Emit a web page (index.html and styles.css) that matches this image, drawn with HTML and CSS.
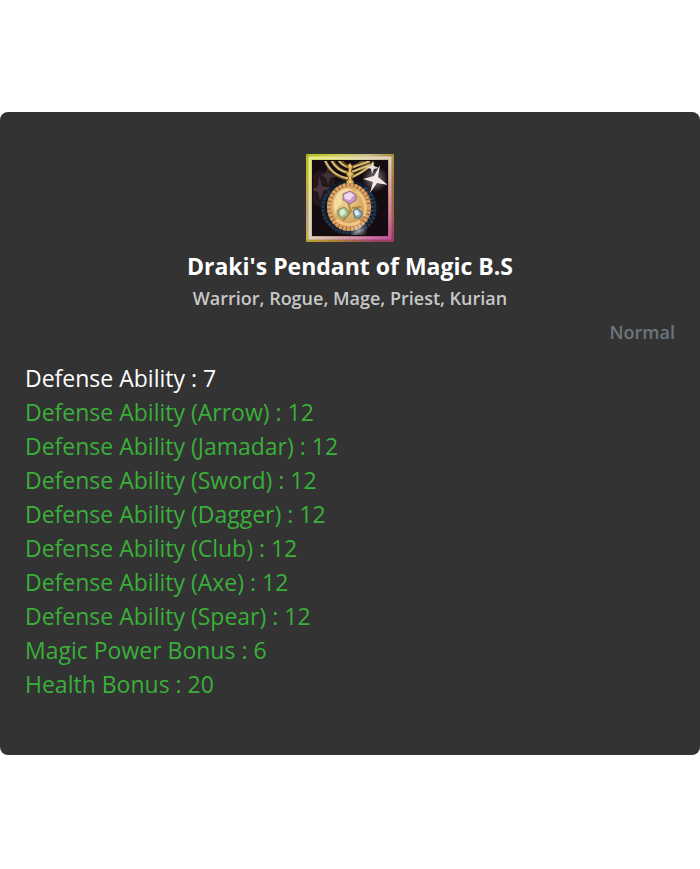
FILE: index.html
```html
<!DOCTYPE html>
<html lang="en">
<head>
  <meta charset="UTF-8">
  <meta name="viewport" content="width=device-width, initial-scale=1">
  <title>Draki's Pendant of Magic B.S</title>
  <link rel="stylesheet" href="styles.css">
</head>
<body>

  <main class="item-card">
    <div class="item-header">
      <svg class="item-icon" viewBox="0 0 88 88" role="img" aria-label="Pendant">
        <defs>
          <linearGradient id="frameTop" x1="0" x2="1" y1="0" y2="0">
            <stop offset="0" stop-color="#b5bd1c"/>
            <stop offset=".35" stop-color="#c9cf4e"/>
            <stop offset=".7" stop-color="#c9c08a"/>
            <stop offset="1" stop-color="#a98a35"/>
          </linearGradient>
          <linearGradient id="frameLeft" x1="0" x2="0" y1="0" y2="1">
            <stop offset="0" stop-color="#b5bd1c"/>
            <stop offset=".35" stop-color="#c2ae3c"/>
            <stop offset=".7" stop-color="#b89a80"/>
            <stop offset="1" stop-color="#c6ba3c"/>
          </linearGradient>
          <linearGradient id="frameRight" x1="0" x2="0" y1="0" y2="1">
            <stop offset="0" stop-color="#b59a3e"/>
            <stop offset=".35" stop-color="#a5752d"/>
            <stop offset=".7" stop-color="#a5623c"/>
            <stop offset="1" stop-color="#9b2f68"/>
          </linearGradient>
          <linearGradient id="frameBottom" x1="0" x2="1" y1="0" y2="0">
            <stop offset="0" stop-color="#b9a62e"/>
            <stop offset=".4" stop-color="#a8783e"/>
            <stop offset=".8" stop-color="#9f3c6b"/>
            <stop offset="1" stop-color="#a33b62"/>
          </linearGradient>
          <linearGradient id="bevel" x1="0" x2="1" y1="0" y2="1">
            <stop offset="0" stop-color="#e8ec86"/>
            <stop offset=".5" stop-color="#dccfc9"/>
            <stop offset="1" stop-color="#c0559a"/>
          </linearGradient>
          <radialGradient id="gold" cx=".4" cy=".4" r=".65">
            <stop offset="0" stop-color="#ecd394"/>
            <stop offset=".6" stop-color="#d9ae68"/>
            <stop offset="1" stop-color="#b97b40"/>
          </radialGradient>
          <radialGradient id="glow">
            <stop offset="0" stop-color="#fff" stop-opacity=".5"/>
            <stop offset="1" stop-color="#fff" stop-opacity="0"/>
          </radialGradient>
          <filter id="soft"><feGaussianBlur stdDeviation=".6"/></filter>
          <clipPath id="inside"><path d="M7 7H81V81H7z"/></clipPath>
        </defs>

        <!-- frame -->
        <path d="M0 0H88L81 7H7z" fill="url(#frameTop)"/>
        <path d="M0 0L7 7V81L0 88z" fill="url(#frameLeft)"/>
        <path d="M88 0V88L81 81V7z" fill="url(#frameRight)"/>
        <path d="M0 88L7 81H81L88 88z" fill="url(#frameBottom)"/>
        <path d="M4 4H84V84H4z" fill="none" stroke="url(#bevel)" stroke-width="3" filter="url(#soft)"/>
        <path d="M6 6H82V82H6z" fill="#150c11"/>

        <g clip-path="url(#inside)">
          <g filter="url(#soft)">
            <ellipse cx="16" cy="35" rx="14" ry="18" fill="#503943" opacity=".25"/>
            <path d="M13 22L16 32L26 34L17 37L14 46L12 38L6 36L12 32z" fill="#77636b" opacity=".4"/>
            <path d="M22 11L24 19L31 23L24 24L22 31L20 24L15 21L20 19z" fill="#77636b" opacity=".35"/>

            <!-- beads behind the pendant -->
            <ellipse cx="43" cy="53" rx="25" ry="24" fill="none" stroke="#111e2d" stroke-width="5"/>
            <path d="M24 37C15 44 14 62 24 71C30 77 35 79 43 79C54 79 61 75 66 67C71 56 70 42 59 34" fill="none" stroke="#23364c" stroke-width="3" stroke-dasharray="3 1"/>
            <path d="M58 34L64 42C68 53 66 64 58 72" fill="none" stroke="#35536e" stroke-width="2" stroke-dasharray="2 2"/>

            <!-- chains -->
            <g fill="none" stroke="#685025" stroke-width="3">
              <path d="M19 6Q25 22 41 25Q56 20 68 8"/>
              <path d="M26 6Q32 17 43 19Q54 16 64 8"/>
              <path d="M34 6Q39 12 45 13Q53 11 58 6"/>
            </g>
            <g fill="none" stroke="#d8bb74" stroke-width="2">
              <path d="M19 6Q25 21 41 24L44 24"/>
              <path d="M25 6Q31 17 43 19L64 11"/>
              <path d="M32 6Q37 13 45 14L64 7"/>
              <path d="M42 24Q54 21 66 10"/>
            </g>
            <path d="M41 12L44 9L47 13L45 17L48 20L45 24L48 28L44 32L40 28L43 24L40 20L43 16z" fill="#d8b354" stroke="#795323"/>
            <path d="M44 11V30" stroke="#fff0a2" stroke-dasharray="2 2"/>

            <!-- pendant -->
            <ellipse cx="43" cy="53" rx="21" ry="23" fill="url(#gold)"/>
            <ellipse cx="43" cy="53" rx="20" ry="22" fill="none" stroke="#9a6033" stroke-width="4"/>
            <ellipse cx="43" cy="53" rx="20" ry="22" fill="none" stroke="#dca366" stroke-width="4" stroke-dasharray="3 1"/>
            <path d="M31 40Q40 31 47 37Q35 40 36 49Q29 55 30 61Q25 50 31 40" fill="#f6dd9e"/>
            <path d="M50 37Q63 46 58 62M30 66Q43 75 54 67" fill="none" stroke="#f0c583" stroke-width="3"/>
            <path d="M42 49L45 57L37 67M46 54L55 53" fill="none" stroke="#b8833c" stroke-width="2"/>

            <!-- gems -->
            <path d="M37 40L44 37L50 41V46L44 50L37 46z" fill="#cb98c3" stroke="#966c87"/>
            <path d="M38 41L44 38L48 41L44 46L39 45z" fill="#f0daee"/>
            <path d="M32 56L38 53L43 57L42 62L36 65L32 61z" fill="#a3bd92" stroke="#7d8a55"/>
            <path d="M34 56L38 55L40 59L36 62L34 60z" fill="#dcebd3"/>
            <path d="M47 57L51 54L57 59L54 64L49 64z" fill="#86a5b4" stroke="#56717d"/>
            <path d="M48 57L51 56L54 60L50 62z" fill="#e1eef5"/>

            <!-- sparkles -->
            <circle cx="69" cy="25" r="13" fill="url(#glow)"/>
            <path d="M74 11L72 23L82 31L71 29L64 39L67 28L57 25L68 22z" fill="#f7e9e8"/>
            <path d="M67 7L68 12L73 14L68 15L66 20L65 15L60 13L65 12z" fill="#eaddd6"/>
            <circle cx="53" cy="76" r="9" fill="url(#glow)"/>
            <path d="M45 81L53 74L56 76L50 82z" fill="#b9b8c2" opacity=".3"/>
          </g>
        </g>
      </svg>
      <h1 class="item-name">Draki's Pendant of Magic B.S</h1>
      <div class="item-classes">Warrior, Rogue, Mage, Priest, Kurian</div>
    </div>

    <div class="item-grade">Normal</div>

    <ul class="item-stats">
      <li class="base">Defense Ability : 7</li>
      <li>Defense Ability (Arrow) : 12</li>
      <li>Defense Ability (Jamadar) : 12</li>
      <li>Defense Ability (Sword) : 12</li>
      <li>Defense Ability (Dagger) : 12</li>
      <li>Defense Ability (Club) : 12</li>
      <li>Defense Ability (Axe) : 12</li>
      <li>Defense Ability (Spear) : 12</li>
      <li>Magic Power Bonus : 6</li>
      <li>Health Bonus : 20</li>
    </ul>
  </main>

</body>
</html>
```
FILE: styles.css
```css
body {
  margin: 0;
  padding: 112px 0;
  background-color: #fff;
  font-family: "Open Sans", sans-serif;
}

.item-card {
  padding: 42px 25px 54px;
  border-radius: 8px;
  background-color: #333;
  color: #fff;
}

.item-header {
  margin-bottom: 2px;
  text-align: center;
}

.item-icon {
  display: block;
  width: 88px;
  height: 88px;
  margin: 0 auto 7px;
}

.item-name {
  margin: 0;
  font-size: 23px;
  font-weight: 700;
  line-height: 34px;
}

.item-classes {
  color: #c8c8c8;
  font-size: 18px;
  font-weight: 600;
  line-height: 30px;
}

.item-grade {
  color: #6c757d;
  font-size: 18px;
  font-weight: 600;
  line-height: 34px;
  text-align: right;
}

.item-stats {
  margin: 12px 0 0;
  padding: 0;
  list-style: none;
  color: #3aaf3a;
  font-size: 23px;
  line-height: 34px;
}

.item-stats .base {
  color: #fff;
}
```
